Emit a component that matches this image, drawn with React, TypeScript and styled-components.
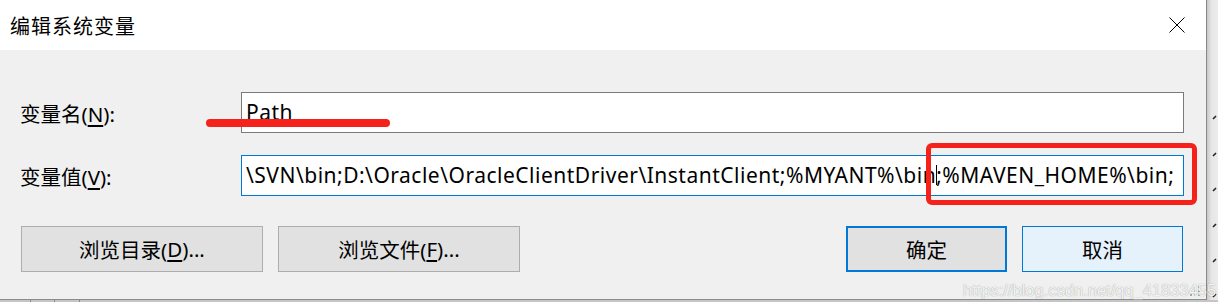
import React from 'react';
import styled, { createGlobalStyle } from 'styled-components';

const GlobalStyle = createGlobalStyle`
  html, body {
    margin: 0;
    padding: 0;
    background: #e4e4e4;
  }
`;

const FONT = `"Noto Sans", "Noto Sans CJK SC", sans-serif`;

const Screen = styled.div`
  position: relative;
  width: 1218px;
  height: 302px;
  display: grid;
  grid-template-columns: 1207px 11px;
  grid-template-rows: 300px 2px;
  overflow: hidden;
  font-family: ${FONT};
  color: #000;
`;

const Window = styled.div`
  position: relative;
  display: flex;
  flex-direction: column;
  border-right: 1px solid #888;
  border-bottom: 1px solid #8c8c8c;
`;

const RightStrip = styled.div`
  background: linear-gradient(to right, #c8c8c8, #e6e6e6 40%, #ececec);
  display: flex;
  align-items: flex-start;
`;

const BottomStrip = styled.div`
  grid-column: 1 / span 2;
  background: #c6c6c6;
  display: flex;
`;

const TaskSeg = styled.div<{ w: number }>`
  width: ${p => p.w}px;
  border-right: 1px solid #8a8a8a;
`;

const TitleBar = styled.div`
  height: 50px;
  background: #fff;
  display: flex;
  align-items: center;
  justify-content: space-between;
  padding: 0 21px 0 10px;
  flex-shrink: 0;
`;

const Title = styled.div`
  font-family: "Noto Sans CJK SC", sans-serif;
  font-size: 20px;
  letter-spacing: 1px;
`;

const Body = styled.div`
  flex: 1;
  background: #f0f0f0;
  padding: 42px 22px 0 20px;
`;

const Form = styled.div`
  display: grid;
  grid-template-columns: 221px 1fr;
  grid-auto-rows: 41px;
  row-gap: 22px;
  align-items: center;
`;

const Label = styled.div`
  font-size: 20.5px;
  padding-top: 1px;
`;

const Key = styled.span`
  text-decoration: underline;
  text-underline-offset: 3px;
`;

const Field = styled.div<{ focused?: boolean }>`
  height: 41px;
  box-sizing: border-box;
  background: #fff;
  border: 1px solid ${p => (p.focused ? '#0078d7' : '#7a7a7a')};
  display: flex;
  align-items: center;
  padding: 0 0 2px 4px;
  font-size: 21px;
  letter-spacing: 0.5px;
  white-space: nowrap;
  overflow: hidden;
`;

const Caret = styled.span`
  display: inline-block;
  flex-shrink: 0;
  width: 1px;
  height: 20px;
  background: #000;
  margin: 0 -1px 0 0;
`;

const ButtonRow = styled.div`
  margin-top: 30px;
  padding: 0 1px;
  display: flex;
  justify-content: space-between;
`;

const Group = styled.div`
  display: flex;
  gap: 15px;
`;

const Button = styled.div<{ w: number; variant?: 'default' | 'hover' }>`
  width: ${p => p.w}px;
  height: 46px;
  box-sizing: border-box;
  display: flex;
  align-items: center;
  justify-content: center;
  font-size: 20.5px;
  background: ${p => (p.variant === 'hover' ? '#e5f1fb' : '#e1e1e1')};
  border: ${p =>
    p.variant === 'default'
      ? '2px solid #0078d7'
      : p.variant === 'hover'
      ? '1px solid #0078d7'
      : '1px solid #adadad'};
`;

const Underline = styled.div`
  position: absolute;
  left: 206px;
  top: 119px;
  width: 184px;
  height: 8px;
  border-radius: 4px;
  background: #f5221b;
`;

const RedBox = styled.div`
  position: absolute;
  left: 926px;
  top: 143px;
  width: 271px;
  height: 62px;
  box-sizing: border-box;
  border: 5px solid #f5221b;
  border-radius: 6px;
`;

const Grip = styled.svg`
  position: absolute;
  right: 5px;
  bottom: 3px;
`;

const Watermark = styled.div`
  position: absolute;
  left: 963px;
  top: 281px;
  font-family: "Liberation Sans", Arial, sans-serif;
  font-size: 16.5px;
  color: rgba(255, 255, 255, 0.9);
  text-shadow: 0 0 1px rgba(110, 110, 110, 0.8);
  white-space: nowrap;
  pointer-events: none;
`;

const CloseIcon = () => (
  <svg width="16" height="16" viewBox="0 0 16 16">
    <path d="M0.5 0.5 L15.5 15.5 M15.5 0.5 L0.5 15.5" stroke="#000" strokeWidth="1" />
  </svg>
);

export default function App() {
  const ticks = [15, 52, 87, 123, 158, 193];
  return (
    <>
      <GlobalStyle />
      <Screen>
        <Window>
          <TitleBar>
            <Title>编辑系统变量</Title>
            <CloseIcon />
          </TitleBar>
          <Body>
            <Form>
              <Label>
                变量名(<Key>N</Key>):
              </Label>
              <Field>Path</Field>
              <Label>
                变量值(<Key>V</Key>):
              </Label>
              <Field focused>
                \SVN\bin;D:\Oracle\OracleClientDriver\InstantClient;%MYANT%\bin
                <Caret />
                ;%MAVEN_HOME%\bin;
              </Field>
            </Form>
            <ButtonRow>
              <Group>
                <Button w={242}>
                  浏览目录(<Key>D</Key>)...
                </Button>
                <Button w={242}>
                  浏览文件(<Key>F</Key>)...
                </Button>
              </Group>
              <Group>
                <Button w={161} variant="default">确定</Button>
                <Button w={161} variant="hover">取消</Button>
              </Group>
            </ButtonRow>
          </Body>
          <Underline />
          <RedBox />
          <Grip width="12" height="10" viewBox="0 0 12 10">
            <g fill="#a8a8a8">
              <rect x="9" y="0" width="2" height="2" />
              <rect x="5" y="4" width="2" height="2" />
              <rect x="9" y="4" width="2" height="2" />
              <rect x="1" y="8" width="2" height="2" />
              <rect x="5" y="8" width="2" height="2" />
              <rect x="9" y="8" width="2" height="2" />
            </g>
          </Grip>
        </Window>
        <RightStrip>
          <svg width="11" height="300" viewBox="0 0 11 300">
            {ticks.map(t => (
              <path key={t} d={`M6 ${t + 104} L9 ${t + 101}`} stroke="#222" strokeWidth="1.6" />
            ))}
          </svg>
        </RightStrip>
        <BottomStrip>
          <TaskSeg w={30} />
          <TaskSeg w={23} />
          <TaskSeg w={24} />
        </BottomStrip>
        <Watermark>https://blog.csdn.net/qq_41833455</Watermark>
      </Screen>
    </>
  );
}
